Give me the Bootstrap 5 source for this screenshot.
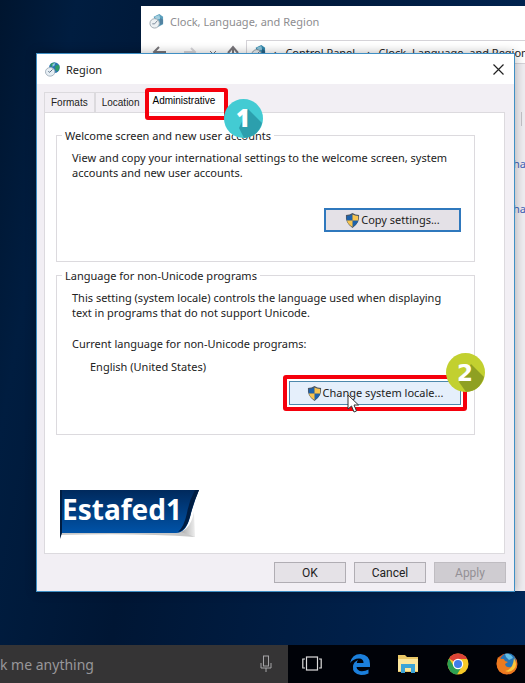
<!DOCTYPE html>
<html lang="en">
<head>
<meta charset="utf-8">
<meta name="viewport" content="width=device-width, initial-scale=1">
<title>Region</title>
<link href="https://cdn.jsdelivr.net/npm/bootstrap@5.3.0/dist/css/bootstrap.min.css" rel="stylesheet">
<style>
  body { font-family: "Noto Sans", sans-serif; font-size: 11px; line-height: 15px; color: #222; }
  .desktop { background: linear-gradient(100deg, #00152f 0%, #001d40 12%, #001634 35%, #00204a 75%, #00285a 100%); }
  .explorer { top: 6px; left: 141px; right: 0; bottom: 54px; background: #efedf1; }
  .explorer-title { height: 30px; color: #8d8d90; }
  .explorer-title span { margin-left: 6px; }
  .explorer-bar { height: 28px; border-bottom: 1px solid #d5d3d8; }
  .address { height: 24px; border: 1px solid #d5d3d8; border-right: 0; }
  .explorer-side { width: 12px; }
  .explorer-side a { color: #3f62b8; margin-top: 30px; }
  .side-rule { height: 14px; border-left: 1px solid #c5c3c8; }
  .region-dialog { top: 53px; left: 36px; right: 10px; background: #f2eff4; border: 1px solid #3f8fc4; box-shadow: 0 0 10px rgba(0,0,0,.3); }
  .title-row { height: 30px; background: #fff; }
  .title-text { font-size: 11px; }
  .title-row span { margin-left: 6px; }
  .close-x { width: 32px; height: 30px; }
  .dialog-body { padding: 4px 9px 0 7px; }
  .tab-strip { font-family: "Liberation Sans", sans-serif; font-size: 10px; border: 0; padding-top: 3px; }
  .tab-strip .nav-link { color: #222; border: 1px solid #dcdade; border-bottom: 0; border-radius: 0; margin: 0; padding: 1px 6px; line-height: 17px; background: #f2eff4; }
  .tab-strip .nav-link.active { background: #fff; padding: 0 10px 3px 5px; }
  .callout { border: 4px solid #f5000c; border-radius: 3px; pointer-events: none; z-index: 2; }
  .callout-tab { top: -3px; left: -1px; right: -2px; bottom: -8px; }
  .callout-button { inset: -6px; }
  .step { width: 39px; height: 39px; z-index: 3; }
  .step text { font: 800 24px "Open Sans", sans-serif; fill: #fff; }
  .step .step-wide { font: 700 23px "DejaVu Sans", sans-serif; }
  .step-one { left: 78px; top: 8px; }
  .step-two { right: -24px; top: -28px; }
  .tab-page { min-height: 442px; background: #fff; border: 1px solid #dcdade; padding: 15px 29px 11px 11px; }
  .group { border: 1px solid #dcdade; padding: 7px 13px 0 15px; }
  .group legend { float: none; width: auto; font-size: 11px; line-height: 15px; margin: 0 0 0 -10px; padding: 0 3px; }
  .shield-button { gap: 1px; height: 24px; width: 137px; border-radius: 0; font-size: 11px; line-height: 16px; padding: 0; color: #222; background: #e4e1e7; border: 2px solid #2f78bd; }
  .shield-button.wide { width: 172px; background: #e5effb; border: 1px solid #4c88ac; }
  .group-copy { min-height: 134px; }
  .group-copy p { margin-bottom: 28px; }
  .group-locale { min-height: 167px; margin-top: 6px; }
  .locale-name { margin: 0 0 7px 18px; }
  .pointer { left: 58px; top: 13px; z-index: 4; }
  .ribbon { width: 144px; height: 52px; margin-left: 3px; }
  .ribbon text { font: 700 28px "Noto Sans", sans-serif; fill: #fff; }
  .dialog-button { width: 72px; height: 21px; padding: 0; border-radius: 0; border: 1px solid #b0adb3; background: #e5e2e7; color: #222; font-family: "Roboto", sans-serif; font-size: 12px; line-height: 16px; }
  .dialog-button:disabled { background: #cfccd1; border-color: #bfbcc1; color: #939095; opacity: 1; }
  .taskbar { height: 38px; background: #000208; }
  .search { width: 288px; background: #353435; }
  .search input { font-size: 14px; height: 28px; line-height: 20px; color: #98979a; background: transparent; }
  .search input::placeholder { color: #98979a; opacity: 1; }
  .task-icons { padding: 0 7px 0 14px; }
</style>
<script src="https://cdn.jsdelivr.net/npm/bootstrap@5.3.0/dist/js/bootstrap.bundle.min.js"></script>
</head>
<body>
<svg width="0" height="0" class="position-absolute" aria-hidden="true">
  <symbol id="shield" viewBox="0 0 16 16">
    <path d="M8 0Q11 2 15 2.200Q16 11 8 16Q0 11 1 2.200Q5 2 8 0Z" fill="#4b5664"/>
    <path d="M8 1.500V8H2Q1.700 5.500 2 3.200Q5.500 3 8 1.500ZM8 8H14Q13 12 8 14.800Z" fill="#1d62ac"/>
    <path d="M8 1.500Q10.500 3 14 3.200Q14.300 5.500 14 8H8ZM2 8H8V14.800Q3 12 2 8Z" fill="#f6c451"/>
  </symbol>
  <symbol id="globe" viewBox="0 0 16 16">
    <circle cx="10" cy="6" r="5.700" fill="#2874b0"/>
    <path d="M6 2Q9 0 11 1L9 4L6 5ZM11 4L15 3Q16.500 8 13 10L11 8Z" fill="#2f9b63"/>
    <path d="M8 2L11 1L10 4L8 5Z" fill="#8ec7e8"/>
    <ellipse cx="5.500" cy="10.500" rx="5" ry="4.600" fill="#e6eef4" stroke="#a3b1bd"/>
    <path d="M8 8L5 11L3.500 10" fill="none" stroke="#52687c"/>
  </symbol>
  <symbol id="places" viewBox="0 0 16 16">
    <path d="M5 3L11 0L15 3V11L9 14Z" fill="#3288ad"/>
    <path d="M6 3L11 1L12 5L8 6Z" fill="#8cc3d8"/>
    <path d="M12 4L15 6V10L11 12Z" fill="#27648a"/>
    <circle cx="6" cy="10" r="5" fill="#e9eef1" stroke="#84939e"/>
    <path d="M9 7L6 10.500H3.500" fill="none" stroke="#52687c"/>
  </symbol>
</svg>
<div class="d-flex flex-column min-vh-100">
  <main class="desktop position-relative flex-grow-1 overflow-hidden">
    <section class="explorer position-absolute overflow-hidden" aria-label="Clock, Language, and Region">
      <div class="explorer-title bg-white d-flex align-items-center px-2">
        <svg width="15" height="15" opacity=".8"><use href="#places"/></svg>
        <span>Clock, Language, and Region</span>
      </div>
      <div class="explorer-bar bg-white d-flex align-items-start text-nowrap">
        <svg class="flex-shrink-0 mt-2" width="105" height="15" viewBox="0 0 105 15" fill="none" stroke="#77757a" stroke-width="2">
          <path d="M25 8H14M18 3L13 8L18 13"/><path d="M43 8H54M50 4L54 8L50 12" stroke="#d5d4d8"/><path d="M69 7L72 10L75 7" stroke-width="1"/><path d="M92 14V4M87 9L92 3L97 9"/>
        </svg>
        <div class="address d-flex align-items-center flex-grow-1 mt-1">
          <svg class="flex-shrink-0 ms-1" width="15" height="15"><use href="#places"/></svg>
          <span class="ms-2">›</span><span class="ms-2">Control Panel</span><span class="ms-2 ps-1">›</span><span class="ms-2">Clock, Language, and Region</span>
        </div>
      </div>
      <div class="explorer-side ms-auto pt-5 d-flex flex-column">
        <div class="side-rule ms-2"></div>
        <a href="#" class="text-decoration-none">ha</a>
        <a href="#" class="text-decoration-none">ha</a>
      </div>
    </section>

    <section class="region-dialog position-absolute" role="dialog" aria-labelledby="dialog-title">
      <header class="title-row d-flex align-items-center ps-2">
        <svg width="15" height="15"><use href="#globe"/></svg>
        <span id="dialog-title" class="title-text">Region</span>
        <button type="button" class="close-x btn p-0 ms-auto d-flex align-items-center justify-content-center" aria-label="Close">
          <svg width="11" height="11" viewBox="0 0 11 11" stroke="#222" stroke-width="1.200"><path d="M0.500 0.500L10.500 10.500M10.500 0.500L0.500 10.500"/></svg>
        </button>
      </header>
      <div class="dialog-body">
        <ul class="tab-strip nav nav-tabs align-items-end" role="tablist">
          <li class="nav-item" role="presentation"><button class="nav-link" type="button" role="tab">Formats</button></li>
          <li class="nav-item" role="presentation"><button class="nav-link" type="button" role="tab">Location</button></li>
          <li class="nav-item position-relative" role="presentation">
            <button class="nav-link active" type="button" role="tab" aria-selected="true">Administrative</button>
            <span class="callout callout-tab position-absolute"></span>
            <svg class="step step-one position-absolute" viewBox="0 0 39 39">
              <circle cx="19.500" cy="19.500" r="19.500" fill="#43cbd3"/>
              <path d="M24 10L38 24Q34 38 20 39L15 29Z" fill="#2c9fad"/>
              <text x="12" y="28">1</text>
            </svg>
          </li>
        </ul>
        <div class="tab-page d-flex flex-column" role="tabpanel">
          <fieldset class="group group-copy">
            <legend>Welcome screen and new user accounts</legend>
            <p>View and copy your international settings to the welcome screen, system accounts and new user accounts.</p>
            <div class="d-flex justify-content-end">
              <button type="button" class="shield-button btn d-flex align-items-center justify-content-center"><svg width="15" height="15"><use href="#shield"/></svg>Copy settings...</button>
            </div>
          </fieldset>
          <fieldset class="group group-locale">
            <legend>Language for non-Unicode programs</legend>
            <p class="mb-3">This setting (system locale) controls the language used when displaying text in programs that do not support Unicode.</p>
            <p class="mb-2">Current language for non-Unicode programs:</p>
            <p class="locale-name">English (United States)</p>
            <div class="d-flex justify-content-end">
              <div class="position-relative">
                <button type="button" class="shield-button wide btn d-flex align-items-center justify-content-center"><svg width="15" height="15"><use href="#shield"/></svg>Change system locale...</button>
                <span class="callout callout-button position-absolute"></span>
                <svg class="pointer position-absolute" width="12" height="19" viewBox="0 0 12 19"><path d="M1 1V15L4.500 12L7 18L9.500 17L7 11H11.500Z" fill="#fff" stroke="#333"/></svg>
                <svg class="step step-two position-absolute" viewBox="0 0 39 39">
                  <circle cx="19.500" cy="19.500" r="19.500" fill="#c2d02f"/>
                  <path d="M25 11L38 24Q34 38 20 39L13 29Z" fill="#8fa022"/>
                  <text class="step-wide" x="11" y="28">2</text>
                </svg>
              </div>
            </div>
          </fieldset>
          <svg class="ribbon mt-auto" viewBox="0 0 144 52" role="img" aria-label="Estafed1">
            <defs>
              <linearGradient id="blue" x2="0" y2="1"><stop stop-color="#00295c"/><stop offset="1" stop-color="#0053a8"/></linearGradient>
              <linearGradient id="curl"><stop stop-color="#888"/><stop offset="1" stop-color="#eee"/></linearGradient>
            </defs>
            <path d="M115 43Q131 43 135 22L136 47Z" fill="url(#curl)"/>
            <path d="M1 42H122L136 47Q80 43 1 45Z" fill="#c8c8c8"/>
            <path d="M1 0H140Q134 15 131 27Q127 43 117 43H1Z" fill="url(#blue)"/>
            <path d="M1 0V49L3 43V0Z" fill="#001d42"/>
            <path d="M136 0Q130 11 128 23Q125 37 119 42Q127 41 131 27Q134 13 140 0Z" fill="#001d42"/>
            <text x="3" y="30">Estafed1</text>
          </svg>
        </div>
      </div>
      <footer class="d-flex justify-content-end gap-2 p-2">
        <button type="button" class="dialog-button btn">OK</button>
        <button type="button" class="dialog-button btn">Cancel</button>
        <button type="button" class="dialog-button btn" disabled>Apply</button>
      </footer>
    </section>
  </main>

  <footer class="taskbar d-flex align-items-center">
    <div class="search h-100 d-flex align-items-center flex-shrink-0 pe-3">
      <input type="text" class="border-0 p-0 flex-grow-1" placeholder="k me anything" aria-label="Search">
      <svg width="12" height="18" viewBox="0 0 12 18" fill="none" stroke="#a5a4a7"><rect x="3.500" y="1" width="5" height="10"/><path d="M1 8V13H11V8M6 13V17"/></svg>
    </div>
    <div class="task-icons d-flex align-items-center justify-content-between flex-grow-1">
      <svg width="20" height="16" viewBox="0 0 20 16" fill="none" stroke="#ddd" stroke-width="1.200"><rect x="4.500" y="1" width="11" height="13"/><path d="M3 3H.8V12H3M17 3H19.200V12H17"/></svg>
      <svg width="20" height="21" viewBox="0 0 20 21"><path d="M0 9Q2 0 10.500 0Q20 1 20 10V13H6.500Q7 17 12 17.300Q15.500 17.300 18.500 15.500V19.500Q15 21 11 21Q2 20 3 12Q3.500 8 8 6Q7 7.500 6.800 9H13.500Q13.500 4.500 9 4.500Q3.500 4.500 0 9Z" fill="#1b7fdb"/></svg>
      <svg width="22" height="20" viewBox="0 0 22 20"><path d="M1 1H8L10 3H21V18H1Z" fill="#e9c766"/><path d="M1 5H21V17H1Z" fill="#fbe69e"/><path d="M4 19V10H18V19H14V14H8V19Z" fill="#3ba4d8"/></svg>
      <svg width="22" height="22" viewBox="0 0 22 22"><circle cx="11" cy="11" r="10.500" fill="#f5c928"/><path d="M11 11L2 5.500Q5 .5 11 .5Q17.500 .5 20.300 6H11Z" fill="#dc4437"/><path d="M2 5.500Q-1.500 12 3 18Q6 21.500 10 21.500L15 13.500H7Z" fill="#2ca052"/><circle cx="11" cy="11" r="5.200" fill="#fff"/><circle cx="11" cy="11" r="4" fill="#3f7de8"/></svg>
      <svg width="22" height="22" viewBox="0 0 22 22"><circle cx="11" cy="11" r="10.500" fill="#e5611c"/><circle cx="12" cy="8.500" r="8.200" fill="#2675b8"/><path d="M9 1Q15 0 17 5L13 7L10 4Z" fill="#64bfe6"/><path d="M2 4L5 6Q8 5 9 8L12 9L9 11Q10 15 15 14Q19 12 20 6Q23 16 16 20Q8 23 3 18Q-1 12 2 4Z" fill="#ec7a20"/><path d="M18 5Q22 12 18 16Q14 20 9 18Q17 17 18 5Z" fill="#fbc63c"/></svg>
    </div>
  </footer>
</div>
</body>
</html>
